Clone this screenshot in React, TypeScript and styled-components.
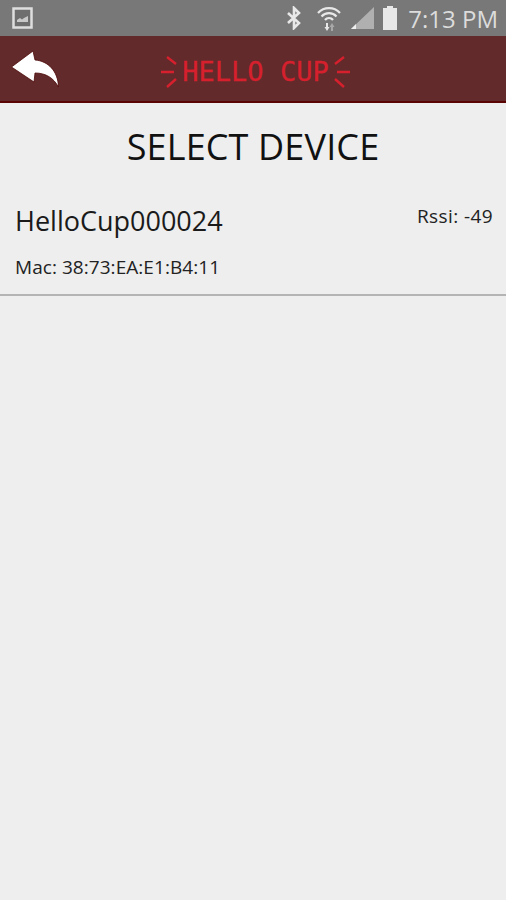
import styled, { createGlobalStyle } from "styled-components";

const GlobalStyle = createGlobalStyle`
  html, body {
    margin: 0;
    padding: 0;
    background-color: #eeeeee;
  }
`;

const Screen = styled.div`
  display: flex;
  flex-direction: column;
  width: 506px;
  height: 900px;
  overflow: hidden;
  background-color: #eeeeee;
  font-family: "Open Sans", "Noto Sans", sans-serif;
`;

const StatusBar = styled.div`
  display: flex;
  align-items: center;
  justify-content: space-between;
  height: 36px;
  padding: 0 8px 0 12px;
  box-sizing: border-box;
  background-color: #787878;
`;

const StatusIcons = styled.div`
  display: flex;
  align-items: center;
  gap: 10px;
`;

const BluetoothIcon = styled.svg`
  margin-right: 5px;
`;

const BatteryIcon = styled.svg`
  margin-left: -2px;
`;

const Clock = styled.span`
  font-size: 24px;
  color: #dcdcdc;
`;

const Toolbar = styled.div`
  display: flex;
  align-items: center;
  justify-content: center;
  position: relative;
  height: 67px;
  padding-top: 7px;
  padding-left: 5px;
  box-sizing: border-box;
  background-color: #622a2a;
  border-bottom: 2px solid #5a0404;
`;

const BackIcon = styled.svg`
  position: absolute;
  left: 11px;
  top: 14px;
`;

const Logo = styled.div`
  display: flex;
  align-items: center;
  gap: 4px;
  color: #d6202e;
`;

const LogoText = styled.span`
  font-family: "DejaVu Sans Mono", monospace;
  font-size: 27px;
  line-height: 34px;
  -webkit-text-stroke: 0.3px #d6202e;
`;

const Rays = styled.svg<{ $flip?: boolean }>`
  transform: ${(props) => (props.$flip ? "scaleX(-1)" : "none")};
`;

const Title = styled.h1`
  margin: 24px 0 0;
  font-size: 36px;
  line-height: 40px;
  letter-spacing: 0.15px;
  font-weight: 400;
  text-align: center;
  color: #111111;
`;

const DeviceRow = styled.div`
  display: flex;
  justify-content: space-between;
  height: 126px;
  margin-top: 3px;
  padding: 0 13px 0 15px;
  box-sizing: border-box;
  border-bottom: 2px solid #b4b4b4;
`;

const DeviceInfo = styled.div`
  display: flex;
  flex-direction: column;
`;

const DeviceName = styled.div`
  margin-top: 34px;
  font-size: 27px;
  line-height: 34px;
  color: #1a1a1a;
`;

const DeviceMac = styled.div`
  margin-top: 17px;
  font-size: 19px;
  line-height: 24px;
  letter-spacing: 0.05px;
  color: #222222;
`;

const Rssi = styled.div`
  margin-top: 34px;
  font-size: 19px;
  line-height: 24px;
  letter-spacing: 0.4px;
  color: #222222;
`;

function LogoRays({ flip }: { flip?: boolean }) {
  return (
    <Rays $flip={flip} width="17" height="36" viewBox="0 0 17 36">
      <path d="M0 18H13M6 3l9 7M6 33l9-8" stroke="#d6202e" strokeWidth="2.4" fill="none" />
    </Rays>
  );
}

export default function App() {
  return (
    <>
      <GlobalStyle />
      <Screen>
        <StatusBar>
          <svg width="21" height="22" viewBox="0 0 21 22">
            <rect x="1.500" y="1.500" width="18" height="19" fill="#6e6e6e" stroke="#dedede" strokeWidth="2.500" />
            <path d="M5 15v-2l3-2 2 1.500 2-1.500 4-2v6z" fill="#c8c8c8" />
          </svg>
          <StatusIcons>
            <BluetoothIcon width="16" height="24" viewBox="0 0 16 24">
              <path d="M2 7l11 10-5 5V2l5 5L2 17" fill="none" stroke="#e8e8e8" strokeWidth="2.600" />
            </BluetoothIcon>
            <svg width="24" height="28" viewBox="0 0 24 28">
              <path d="M1 9a15 15 0 0 1 22 0M4.500 12.500a10 10 0 0 1 15 0M8 16a5 5 0 0 1 8 0" fill="none" stroke="#e8e8e8" strokeWidth="2.200" />
              <path d="M9 19h2v4h1.500L10 27l-2.500-4H9z" fill="#e8e8e8" />
              <path d="M14 27v-4h-1.500l2.500-4 2.500 4H16v4z" fill="#a8a8a8" />
            </svg>
            <svg width="23" height="24" viewBox="0 0 23 24">
              <path d="M0 23L23 1v22z" fill="#b0b0b0" />
              <path d="M0 23l5-5v5z" fill="#efefef" />
            </svg>
            <BatteryIcon width="16" height="24" viewBox="0 0 16 24">
              <path d="M5 0h6v2h4v22H1V2h4z" fill="#e8e8e8" />
            </BatteryIcon>
            <Clock>7:13 PM</Clock>
          </StatusIcons>
        </StatusBar>
        <Toolbar>
          <BackIcon width="48" height="38" viewBox="0 0 48 38">
            <path d="M0.500 17L22 1l2 9c13 1 23 11 23.500 27-5-9-12.500-14-23.500-14l-1 9z" fill="#ffffff" stroke="#4d0808" strokeWidth="0.800" />
          </BackIcon>
          <Logo>
            <LogoRays />
            <LogoText>HELLO CUP</LogoText>
            <LogoRays flip />
          </Logo>
        </Toolbar>
        <Title>SELECT DEVICE</Title>
        <DeviceRow>
          <DeviceInfo>
            <DeviceName>HelloCup000024</DeviceName>
            <DeviceMac>Mac: 38:73:EA:E1:B4:11</DeviceMac>
          </DeviceInfo>
          <Rssi>Rssi: -49</Rssi>
        </DeviceRow>
      </Screen>
    </>
  );
}
